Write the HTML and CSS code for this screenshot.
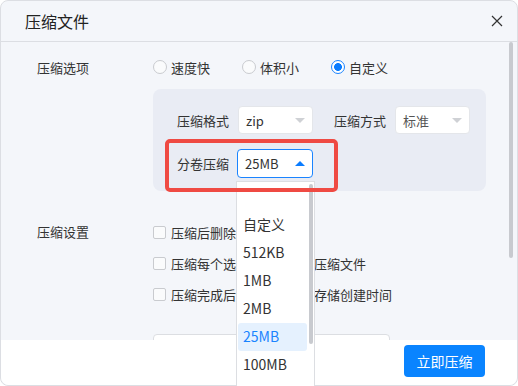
FILE: index.html
```html
<!DOCTYPE html>
<html lang="zh-CN">
<head>
  <meta charset="UTF-8" />
  <title>压缩文件</title>
  <link rel="stylesheet" href="styles.css">
</head>
<body>
  <div class="window">
    <header class="titlebar">
      <h1>压缩文件</h1>
      <button class="close" aria-label="关闭">
        <svg width="12" height="12" viewBox="0 0 12 12"><path d="M1 1L11 11M11 1L1 11" stroke="#333" stroke-width="1.2" fill="none"/></svg>
      </button>
    </header>

    <main class="content">
      <div class="row">
        <div class="label">压缩选项</div>
        <div class="radios">
          <label class="radio"><span class="dot"></span>速度快</label>
          <label class="radio"><span class="dot"></span>体积小</label>
          <label class="radio checked"><span class="dot"></span>自定义</label>
        </div>
      </div>

      <div class="panel">
        <div class="panel-row">
          <span class="field-label">压缩格式</span>
          <div class="select"><span>zip</span><i class="caret"></i></div>
          <span class="field-label second">压缩方式</span>
          <div class="select"><span class="muted">标准</span><i class="caret"></i></div>
        </div>
        <div class="panel-row">
          <span class="field-label">分卷压缩</span>
          <div class="select open">
            <span>25MB</span><i class="caret up"></i>
            <ul class="dropdown">
              <li>自定义</li>
              <li>512KB</li>
              <li>1MB</li>
              <li>2MB</li>
              <li class="active">25MB</li>
              <li>100MB</li>
            </ul>
          </div>
        </div>
        <div class="highlight"></div>
      </div>

      <div class="row settings">
        <div class="label">压缩设置</div>
        <div class="checks">
          <label class="check"><span class="box"></span>压缩后删除源文件</label>
          <label class="check"><span class="box"></span>压缩每个选中项为单独的压缩文件</label>
          <label class="check"><span class="box"></span>压缩完成后保留源文件的存储创建时间</label>
        </div>
      </div>

      <div class="path-box"></div>
      <div class="scrollbar"></div>
    </main>

    <footer class="footer">
      <button class="primary">立即压缩</button>
    </footer>
  </div>
</body>
</html>
```

FILE: styles.css
```css
* {
  box-sizing: border-box;
  margin: 0;
  padding: 0;
}

body {
  font-family: "Noto Sans CJK SC", "Noto Sans", sans-serif;
  color: #333;
  font-size: 13px;
  background: #ffffff;
  overflow: hidden;
}

.window {
  position: relative;
  width: 518px;
  height: 386px;
  border: 1px solid #dcdee3;
  border-radius: 8px;
  background-color: #f4f6fa;
  display: flex;
  flex-direction: column;
}

.titlebar {
  height: 41px;
  flex: none;
  border-bottom: 1px solid #dcdee3;
  display: flex;
  align-items: center;
  justify-content: space-between;
  padding: 0 14px 0 24px;
}

.titlebar h1 {
  font-size: 16px;
  font-weight: normal;
  color: #222;
}

.close {
  border: none;
  background: none;
  width: 12px;
  height: 12px;
  display: flex;
}

.content {
  position: relative;
  flex: 1;
  min-height: 0;
  padding: 13px 0 0 36px;
}

.row {
  display: flex;
  align-items: center;
  height: 24px;
}

.label {
  width: 116px;
  flex: none;
}

.radios {
  display: flex;
  gap: 32px;
}

.radio {
  display: flex;
  align-items: center;
  gap: 4px;
}

.dot {
  width: 14px;
  height: 14px;
  border: 1px solid #c9cbcf;
  border-radius: 50%;
  background: #fafbfc;
}

.radio.checked .dot {
  border-color: #1a84ff;
  background: radial-gradient(circle, #0a7cff 0 3.6px, #fff 4.2px);
}

.panel {
  position: relative;
  margin: 10px 0 0 116px;
  width: 333px;
  padding: 17px 18px 13px 24px;
  background-color: #e9ecf4;
  border-radius: 8px;
  display: flex;
  flex-direction: column;
  gap: 15px;
}

.panel-row {
  display: flex;
  align-items: center;
}

.field-label {
  flex: none;
  white-space: nowrap;
  margin-right: 9px;
}

.field-label.second {
  margin-left: 21px;
}

.select {
  position: relative;
  flex: none;
  width: 75px;
  height: 28px;
  background: #fff;
  border: 1px solid #e4e6ea;
  border-radius: 4px;
  display: flex;
  align-items: center;
  justify-content: space-between;
  padding: 0 7px 0 7px;
}

.select .muted {
  color: #555;
}

.select.open {
  border-color: #1a84ff;
  height: 29px;
  margin-left: -1px;
  width: 76px;
  z-index: 3;
}

.caret {
  width: 0;
  height: 0;
  border-left: 5px solid transparent;
  border-right: 5px solid transparent;
  border-top: 5px solid #cfd1d5;
}

.caret.up {
  border-top: none;
  border-bottom: 5px solid #0a7cff;
}

.highlight {
  position: absolute;
  left: 12px;
  top: 50px;
  width: 173px;
  height: 53px;
  border: 4px solid #ef4a43;
  border-radius: 5px;
  pointer-events: none;
  z-index: 20;
}

.dropdown {
  position: absolute;
  left: -2px;
  top: 31px;
  width: 79px;
  height: 206px;
  list-style: none;
  background: #fff;
  border: 1px solid #dcdee2;
  border-bottom: none;
  padding: 29px 7px 0 1px;
  font-size: 14px;
  z-index: 10;
}

.dropdown::after {
  content: "";
  position: absolute;
  right: 1px;
  top: 2px;
  width: 4px;
  height: 160px;
  background: #c8cacf;
  border-radius: 2px;
}

.dropdown li {
  height: 28px;
  line-height: 27px;
  padding-left: 5px;
  color: #333;
  border-radius: 3px;
}

.dropdown li.active {
  background-color: #e5f1fe;
  color: #1a84ff;
}

.settings {
  margin-top: 31px;
  align-items: flex-start;
  height: auto;
}

.settings .label {
  line-height: 20px;
}

.checks {
  display: flex;
  flex-direction: column;
  gap: 11px;
}

.check {
  display: flex;
  align-items: center;
  height: 20px;
  gap: 5px;
  white-space: nowrap;
}

.box {
  width: 13px;
  height: 13px;
  border: 1px solid #c9cbcf;
  border-radius: 2px;
  background: #fafbfc;
}

.path-box {
  margin: 30px 0 0 116px;
  width: 237px;
  height: 32px;
  background: #fff;
  border: 1px solid #dcdee2;
  border-radius: 4px;
}

.scrollbar {
  position: absolute;
  right: 4px;
  top: 0;
  width: 4px;
  height: 216px;
  background: #c8cacf;
  border-radius: 2px;
}

.footer {
  position: relative;
  z-index: 2;
  height: 45px;
  flex: none;
  background: #fff;
  border-radius: 0 0 8px 8px;
  display: flex;
  justify-content: flex-end;
  align-items: flex-start;
  padding: 5px 32px 0 0;
}

.primary {
  width: 81px;
  height: 32px;
  border: none;
  border-radius: 4px;
  background-color: #0a84ff;
  color: #fff;
  font-family: "Noto Sans CJK SC", sans-serif;
  font-size: 14px;
}
```
